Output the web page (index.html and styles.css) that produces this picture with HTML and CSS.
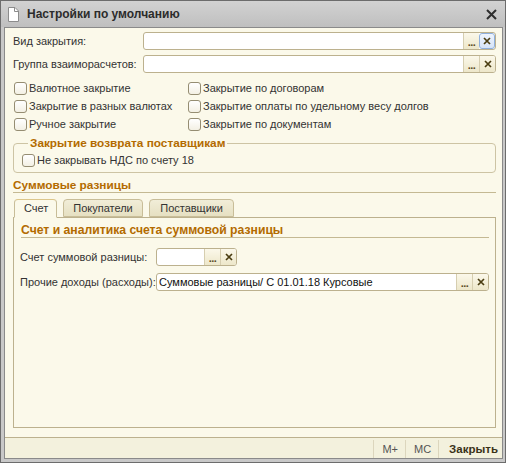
FILE: index.html
```html
<!DOCTYPE html>
<html lang="ru">
<head>
<meta charset="utf-8">
<title>Настройки по умолчанию</title>
<link rel="stylesheet" href="styles.css">
</head>
<body>
<div class="window">
  <div class="titlebar">
    <svg class="doc-icon" width="11" height="15" viewBox="0 0 11 15"><path d="M0.5 0.5h6.5l3.5 3.5v10.5h-10z" fill="#fff" stroke="#8c8c8c"/><path d="M6.5 0.5v4h4" fill="none" stroke="#8c8c8c"/></svg>
    <span class="title">Настройки по умолчанию</span>
    <svg class="win-close" width="11" height="11" viewBox="0 0 11 11"><path d="M1 1L10 10M10 1L1 10" stroke="#2e2e2e" stroke-width="2"/></svg>
  </div>
  <div class="client">
    <div class="body">
      <div class="field-row">
        <span class="lbl">Вид закрытия:</span>
        <div class="input wide">
          <span class="val"></span>
          <span class="btn dots">...</span>
          <span class="btn clear focused"><svg width="8" height="8" viewBox="0 0 8 8"><path d="M1 1L7 7M7 1L1 7" stroke="#4a3d12" stroke-width="1.7"/></svg></span>
        </div>
      </div>
      <div class="field-row">
        <span class="lbl">Группа взаиморасчетов:</span>
        <div class="input wide">
          <span class="val"></span>
          <span class="btn dots">...</span>
          <span class="btn clear"><svg width="8" height="8" viewBox="0 0 8 8"><path d="M1 1L7 7M7 1L1 7" stroke="#4a3d12" stroke-width="1.7"/></svg></span>
        </div>
      </div>
      <div class="checks">
        <label class="chk"><span class="box"></span>Валютное закрытие</label>
        <label class="chk"><span class="box"></span>Закрытие по договорам</label>
        <label class="chk"><span class="box"></span>Закрытие в разных валютах</label>
        <label class="chk"><span class="box"></span>Закрытие оплаты по удельному весу долгов</label>
        <label class="chk"><span class="box"></span>Ручное закрытие</label>
        <label class="chk"><span class="box"></span>Закрытие по документам</label>
      </div>
      <fieldset class="group">
        <legend>Закрытие возврата поставщикам</legend>
        <label class="chk"><span class="box"></span>Не закрывать НДС по счету 18</label>
      </fieldset>
      <div class="section">Суммовые разницы</div>
      <div class="tabs">
        <span class="tab active">Счет</span>
        <span class="tab">Покупатели</span>
        <span class="tab">Поставщики</span>
      </div>
      <div class="panel">
        <div class="section inner">Счет и аналитика счета суммовой разницы</div>
        <div class="field-row p-row first">
          <span class="lbl p-lbl">Счет суммовой разницы:</span>
          <div class="input short">
            <span class="val"></span>
            <span class="btn dots">...</span>
            <span class="btn clear"><svg width="8" height="8" viewBox="0 0 8 8"><path d="M1 1L7 7M7 1L1 7" stroke="#4a3d12" stroke-width="1.7"/></svg></span>
          </div>
        </div>
        <div class="field-row p-row">
          <span class="lbl p-lbl">Прочие доходы (расходы):</span>
          <div class="input wide">
            <span class="val">Суммовые разницы/ С 01.01.18 Курсовые</span>
            <span class="btn dots">...</span>
            <span class="btn clear"><svg width="8" height="8" viewBox="0 0 8 8"><path d="M1 1L7 7M7 1L1 7" stroke="#4a3d12" stroke-width="1.7"/></svg></span>
          </div>
        </div>
      </div>
    </div>
    <div class="footer">
      <span class="fbtn">M+</span>
      <span class="fbtn">MC</span>
      <span class="fbtn strong">Закрыть</span>
    </div>
  </div>
</div>
</body>
</html>
```
FILE: styles.css
```css
* { box-sizing: border-box; }
html, body { margin: 0; padding: 0; }
body {
  width: 506px;
  height: 463px;
  font-family: "Liberation Sans", Arial, sans-serif;
  font-size: 11px;
  color: #333;
  background: #fff;
}
.window {
  width: 506px;
  height: 463px;
  border: 1px solid #6c6c6c;
  background: #c8c8c8;
  padding: 0 2px 3px 3px;
  display: flex;
  flex-direction: column;
}
.titlebar {
  height: 26px;
  flex: none;
  display: flex;
  align-items: center;
  background: linear-gradient(#d2d2d2, #bfbfbf);
  margin: 0 -2px 0 -3px;
  padding: 0 8px 0 7px;
}
.doc-icon { flex: none; margin-right: 8px; margin-top: 1px; }
.title {
  flex: 1;
  font-weight: bold;
  font-size: 12px;
  color: #2c2c2c;
}
.win-close { flex: none; }
.client {
  flex: 1;
  display: flex;
  flex-direction: column;
  border: 1px solid #8a8a8a;
  background: #fbf9ea;
}
.body {
  flex: 1;
  display: flex;
  flex-direction: column;
  padding: 4px 6px 9px 8px;
}
.field-row {
  display: flex;
  align-items: center;
  height: 18px;
  margin-bottom: 5px;
}
.lbl {
  width: 130px;
  flex: none;
  white-space: nowrap;
}
.input {
  display: flex;
  height: 18px;
  background: #fff;
  border: 1px solid #bcb18e;
  border-radius: 3px;
  overflow: hidden;
}
.input.wide { flex: 1; }
.input.short { width: 81px; flex: none; }
.val {
  flex: 1;
  padding-left: 2px;
  line-height: 16px;
  color: #111;
  white-space: nowrap;
  overflow: hidden;
}
.btn {
  flex: none;
  width: 16px;
  height: 16px;
  display: flex;
  align-items: center;
  justify-content: center;
  background: linear-gradient(#fbf8ea, #ede7ca);
  border-left: 1px solid #d6ceb0;
}
.btn.dots {
  font-weight: bold;
  font-size: 11px;
  color: #5a4e25;
  align-items: flex-end;
  line-height: 13px;
  letter-spacing: -0.5px;
}
.btn.clear.focused {
  background: linear-gradient(#eef4fd, #d6e4f8);
  border: 1px solid #8fb0dd;
  border-radius: 3px;
  height: 16px;
}
.checks {
  display: grid;
  grid-template-columns: 174px 1fr;
  margin-top: 1px;
  padding-left: 1px;
}
.chk {
  display: flex;
  align-items: center;
  height: 18px;
  white-space: nowrap;
}
.box {
  width: 13px;
  height: 13px;
  flex: none;
  border: 1px solid #958d72;
  border-radius: 3px;
  background: linear-gradient(#ffffff, #f3f0e4);
  margin-right: 2px;
}
.group {
  margin: 3px 0 0 0;
  padding: 1px 8px 3px 8px;
  border: 1px solid #cdc4a4;
  border-radius: 4px;
  min-width: 0;
}
.group legend {
  margin-left: 6px;
  padding: 0 2px;
  font-weight: bold;
  font-size: 11.8px;
  line-height: 14px;
  color: #b36b00;
}
.section {
  margin-top: 5px;
  font-weight: bold;
  font-size: 11.8px;
  line-height: 14px;
  color: #b36b00;
  border-bottom: 1px solid #c4b993;
}
.tabs {
  display: flex;
  margin-top: 6px;
  padding-left: 1px;
  gap: 6px;
  position: relative;
  z-index: 1;
}
.tab {
  height: 18px;
  line-height: 17px;
  padding: 0 9px;
  border: 1px solid #c8bd98;
  border-radius: 4px 4px 0 0;
  background: linear-gradient(#f1edd8, #e6e0c2);
  color: #333;
  font-size: 11px;
  text-align: center;
}
.tab:nth-child(2) { width: 80px; }
.tab:nth-child(3) { width: 85px; }
.tab.active {
  width: 43px;
  height: 19px;
  background: #fbf9ea;
  border-color: #dcc68a #c8bd98 #fbf9ea #c8bd98;
  margin-bottom: -1px;
}
.panel {
  flex: 1;
  border: 1px solid #bcb18e;
  padding: 5px 6px 0 7px;
}
.section.inner { margin-top: 0; margin-bottom: 10px; font-size: 12.2px; }
.p-row { margin-bottom: 7px; }
.p-lbl { width: 136px; margin-left: -1px; }
.footer {
  flex: none;
  height: 21px;
  border-top: 1px solid #bcb18e;
  background: #f3f1dd;
  display: flex;
  justify-content: flex-end;
  align-items: stretch;
  padding: 2px 4px 0 0;
}
.fbtn {
  display: flex;
  align-items: center;
  padding: 0 7px 0 8px;
  border-left: 1px solid #dcd6bd;
  color: #555;
  font-size: 11px;
}
.fbtn.strong {
  font-weight: bold;
  color: #3a3218;
  padding: 0 0 0 10px;
  font-size: 11.5px;
}
```
